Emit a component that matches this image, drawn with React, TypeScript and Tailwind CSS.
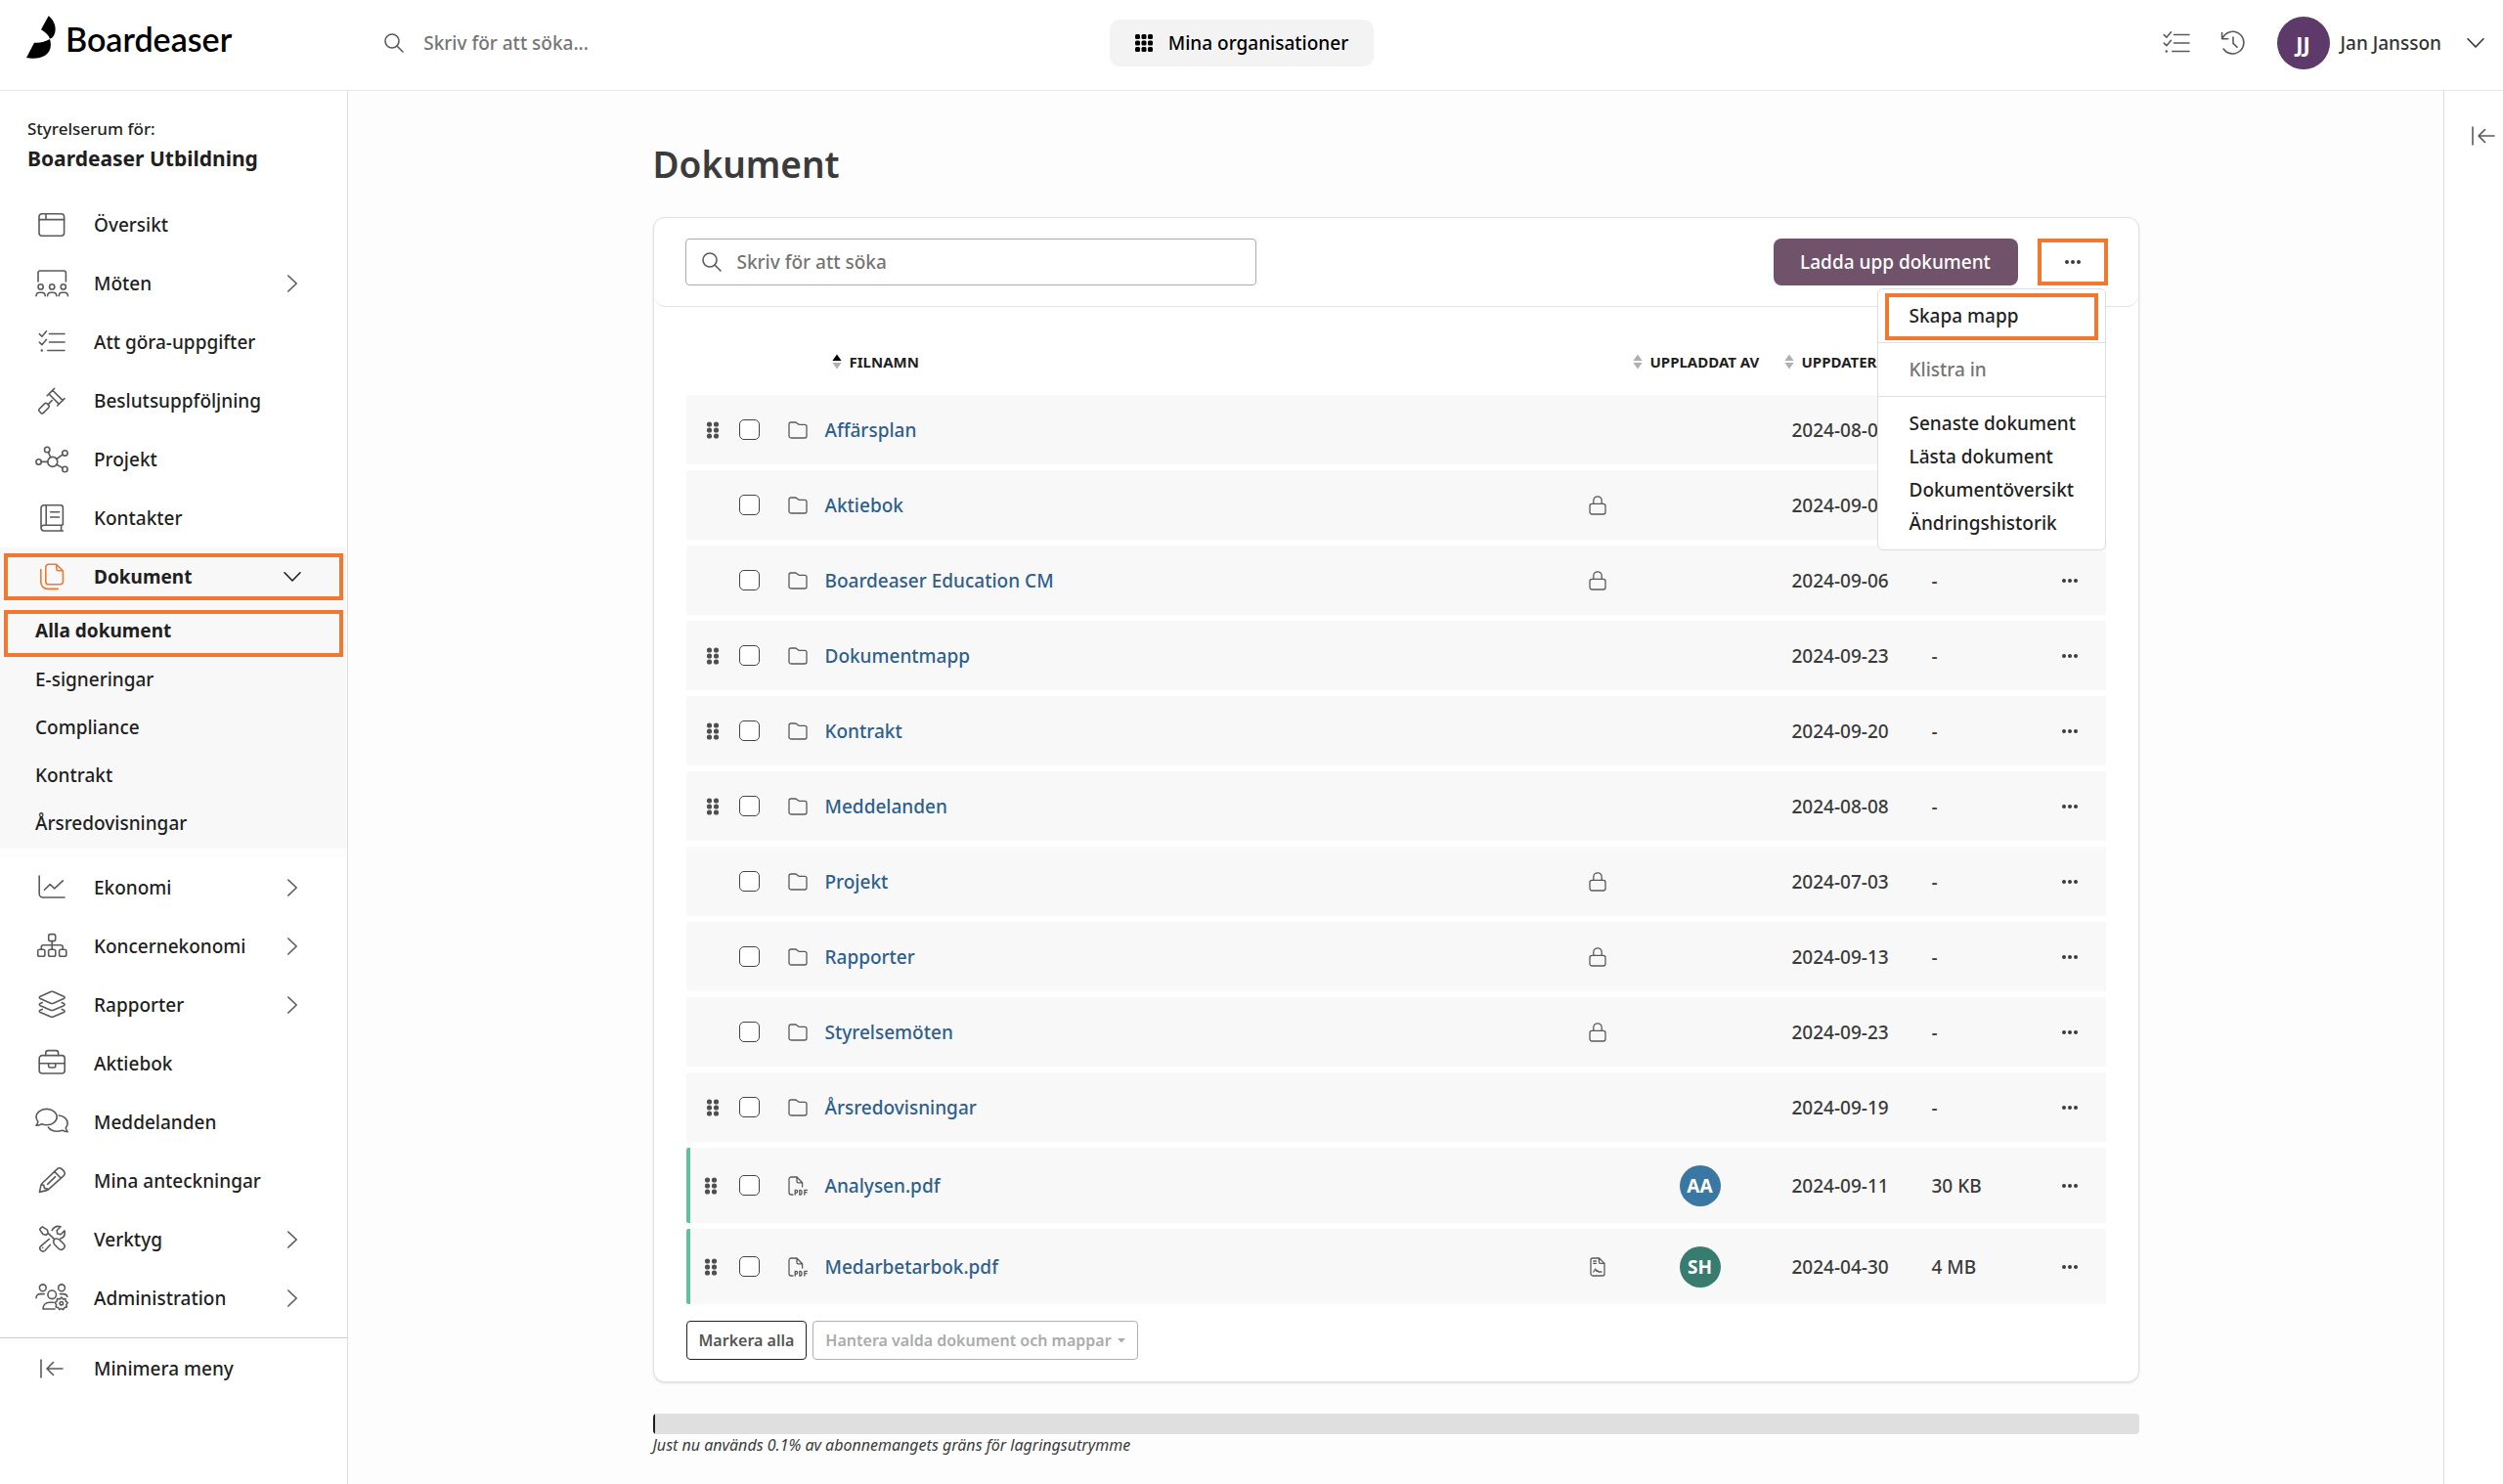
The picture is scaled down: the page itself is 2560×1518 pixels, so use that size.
import React, { useState } from "react";

type IconProps = { children: React.ReactNode; w?: number; h?: number; className?: string };

function Icon({ children, w = 34, h = 28, className = "" }: IconProps) {
  return (
    <svg
      width={w}
      height={h}
      viewBox={`0 0 ${w} ${h}`}
      fill="none"
      stroke="currentColor"
      strokeWidth="1.6"
      strokeLinecap="round"
      strokeLinejoin="round"
      aria-hidden="true"
      className={`shrink-0 overflow-visible ${className}`}
    >
      {children}
    </svg>
  );
}

const OverviewIcon = () => (
  <Icon>
    <rect x="4" y="2.8" width="25.6" height="22.4" rx="3" />
    <path d="M4 8.6h25.6M11 2.8v5.8" />
  </Icon>
);

const MeetingIcon = () => (
  <Icon>
    <path d="M3 12V3.2A2.2 2.2 0 0 1 5.2 1h24A2.2 2.2 0 0 1 31.4 3.2V12" />
    <circle cx="5.6" cy="17.4" r="2.6" />
    <circle cx="17.2" cy="17.4" r="2.6" />
    <circle cx="28.8" cy="17.4" r="2.6" />
    <path d="M1 26.8c0-2.2 1.6-3.6 3.6-3.6h2c2 0 3.6 1.4 3.6 3.6M12.6 26.8c0-2.2 1.6-3.6 3.6-3.6h2c2 0 3.6 1.4 3.6 3.6M24.2 26.8c0-2.2 1.6-3.6 3.6-3.6h2c2 0 3.6 1.4 3.6 3.6" />
  </Icon>
);

const TasksIcon = () => (
  <Icon>
    <path d="M14.5 5.5H30M14.5 14H30M12.8 22.5H30M4.3 5.6l2.6 2.6 4.6-5.4M4.3 14.1l2.6 2.6 4.6-5.4" />
    <circle cx="6.8" cy="22.5" r="1.2" fill="currentColor" stroke="none" />
  </Icon>
);

const GavelIcon = () => (
  <Icon>
    <path d="M12.2 8.8l7.4-7.4M22.6 19l7.4-7.4M14 7l10.4 10.4M17.8 3.2l10.4 10.4M13.2 17.6l4-4" />
    <rect x="-5.6" y="-2.9" width="11.2" height="5.8" rx="1.8" transform="translate(9 21.6) rotate(-45)" />
  </Icon>
);

const ProjectIcon = () => (
  <Icon>
    <circle cx="17.8" cy="16.4" r="5" />
    <circle cx="3.6" cy="16.4" r="2.7" />
    <circle cx="12.2" cy="4" r="2.7" />
    <circle cx="30.4" cy="7.4" r="2.7" />
    <circle cx="30.4" cy="24" r="2.7" />
    <path d="M6.3 16.4h6.5M13.3 6.5l2.5 5.3M28.1 8.8l-6.2 4.7M28 22.6l-6-3.4" />
  </Icon>
);

const ContactsIcon = () => (
  <Icon>
    <path d="M28.4 20.6V3.4A2.6 2.6 0 0 0 25.8.8H9A3 3 0 0 0 6 3.8v20a3.2 3.2 0 0 0 3.2 3.2h19.2M11.2.8v20M9.2 21.2h17.2a2 2 0 0 0 2-2M9.2 21.2A3 3 0 0 0 6 24.2M26.6 21.2V27M15.6 7.8h9M15.6 13h9" />
  </Icon>
);

const DocumentsIcon = () => (
  <Icon className="text-[#f07830]">
    <path d="M21.6 1.3h-8a2.8 2.8 0 0 0-2.8 2.8v14.8a2.8 2.8 0 0 0 2.8 2.8h12a2.8 2.8 0 0 0 2.8-2.8V8zM21.8 1.5v4.7a1.6 1.6 0 0 0 1.6 1.6h4.8M5.8 6.6v13a6.8 6.8 0 0 0 6.8 6.8h10.6" />
  </Icon>
);

const ChartIcon = () => (
  <Icon>
    <path d="M4.2 2v18.2A3.8 3.8 0 0 0 8 24h22M9.4 16.3l5.8-5.7 4.5 4.2 8.6-8" />
  </Icon>
);

const OrgIcon = () => (
  <Icon>
    <rect x="13.7" y="1.6" width="7" height="7" rx="1.8" />
    <rect x="2.7" y="17.2" width="7.2" height="7" rx="1.8" />
    <rect x="13.6" y="17.2" width="7.2" height="7" rx="1.8" />
    <rect x="24.6" y="17.2" width="7.2" height="7" rx="1.8" />
    <path d="M17.2 8.6v8.6M6.3 17.2v-2.4a2 2 0 0 1 2-2h17.9a2 2 0 0 1 2 2v2.4" />
  </Icon>
);

const LayersIcon = () => (
  <Icon>
    <path d="M15.8.6L5.2 5.3c-1.2.6-1.2 1.6 0 2.2l10.6 4.7c.9.4 1.9.4 2.8 0l10.6-4.7c1.2-.6 1.2-1.6 0-2.2L18.6.6c-.9-.4-1.9-.4-2.8 0z" />
    <path d="M7.2 11.6l-2 .9c-1.2.6-1.2 1.6 0 2.2l10.6 4.5c.9.4 1.9.4 2.8 0l10.6-4.5c1.2-.6 1.2-1.6 0-2.2l-2-.9M7.2 18.4l-2 .9c-1.2.6-1.2 1.6 0 2.2l10.6 4.5c.9.4 1.9.4 2.8 0l10.6-4.5c1.2-.6 1.2-1.6 0-2.2l-2-.9" />
  </Icon>
);

const BriefcaseIcon = () => (
  <Icon>
    <rect x="4.2" y="5.6" width="26" height="18.4" rx="3" />
    <path d="M10.8 5.6V3a2.4 2.4 0 0 1 2.4-2.4h8A2.4 2.4 0 0 1 23.6 3v2.6M4.2 13.8h26M13.6 13.8v2.8a1.4 1.4 0 0 0 1.4 1.4h4.4a1.4 1.4 0 0 0 1.4-1.4v-2.8" />
  </Icon>
);

const ChatIcon = () => (
  <Icon>
    <path d="M11.6.4c6 0 10.6 3.6 10.6 8.2s-4.6 8.2-10.6 8.2c-1.9 0-3.6-.4-5.2-1-1.5 1-3.3 1.5-5.5 1.5 1-1.1 1.7-2.5 2-4-1.2-1.3-1.900-2.900-1.900-4.700C1 4 5.6.4 11.6.4z" />
    <path d="M24.4 7c5 .6 8.7 3.900 8.7 8 0 1.8-.7 3.4-1.900 4.700.3 1.500 1 2.900 2 4-2.200 0-4-.5-5.500-1.500-1.600.6-3.300 1-5.200 1-3.900 0-7.200-1.600-9.100-4" />
  </Icon>
);

const PencilIcon = () => (
  <Icon>
    <path d="M22.4 1.9a3.4 3.4 0 0 1 4.8 0l2 2a3.4 3.4 0 0 1 0 4.8L13.6 22.6a4 4 0 0 1-1.7 1L4.4 25.4 6 18.2a4 4 0 0 1 1-1.7zM19.6 4.4l6.8 6.8M6.2 17.8l2.6.6.6 3 3 .7.8.9M12.6 17.3l8-7.6" />
  </Icon>
);

const ToolsIcon = () => (
  <Icon>
    <path d="M5 2.8L7.4.9l5 3.3.8 3.2 6.4 6.2M13.2 7.4l-2 1.9-3.3-.8L4.6 3.6 5 2.8" />
    <path d="M19.6 13.6c1.9-1 3.9-.7 5.4.7l4 3.9c3.3 3.4-1.7 8.4-5 5l-4-4c-1.4-1.5-1.6-3.7-.4-5.6z" />
    <path d="M17.2 4.6C19 1.2 22.4-.2 26 .8l-3.9 3.9.7 3.3 3.3.7L30 4.9c.8 4-.8 7-4.2 8.2M14.4 13.4l-8.6 7.2c-3 3 1.4 7.4 4.4 4.4l5.2-5.7M7.8 22.4v.1" />
  </Icon>
);

const AdminIcon = () => (
  <Icon>
    <circle cx="7.8" cy="3.3" r="3.4" />
    <circle cx="27" cy="3.3" r="3.4" />
    <circle cx="17.2" cy="10.3" r="4.3" />
    <path d="M1 13.8c0-2.4 1.8-4.2 4.2-4.2h4M25.4 9.6h3.2c2 0 3.6 1 4.2 2.6M20 25H8c0-4.2 2.8-6.8 6.6-6.8h4.2" />
    <path d="M26.9 13l1.5 1.9 2.4-.4.4 2.4 2 1.7-1.4 2 .5 2.4-2.4.6-1.3 2-1.9-1-1.9 1-1.3-2-2.4-.6.5-2.4-1.4-2 2-1.7.4-2.4 2.4.4z" />
    <circle cx="26.8" cy="19.2" r="1.7" />
  </Icon>
);

const CollapseIcon = ({ className = "" }: { className?: string }) => (
  <Icon w={24} h={20} className={className}>
    <path d="M1 1v18M23 10H7M13.5 3.5L7 10l6.5 6.5" />
  </Icon>
);

const SearchIcon = () => (
  <Icon w={20} h={20}>
    <circle cx="8" cy="8" r="7" />
    <path d="M13 13l6 6" />
  </Icon>
);

const ChevronRight = () => (
  <Icon w={10} h={18}>
    <path d="M.8 1l8.4 8-8.4 8" />
  </Icon>
);

const ChevronDown = ({ className = "" }: { className?: string }) => (
  <Icon w={18} h={10} className={className}>
    <path d="M1 .8l8 8.2 8-8.2" />
  </Icon>
);

const HistoryIcon = () => (
  <Icon w={26} h={26}>
    <path d="M1.6 2.6v6.2h6.2M2 8.6A11.3 11.3 0 1 1 3.2 19M13 7v6.4l4 3.8" />
  </Icon>
);

const FolderIcon = () => (
  <Icon w={20} h={18}>
    <path
      strokeWidth="1.3"
      d="M3 1h4.3c.7 0 1.3.3 1.7.7l1.2 1.1c.4.4.9.5 1.5.5H17a2 2 0 0 1 2 2V15a2 2 0 0 1-2 2H3a2 2 0 0 1-2-2V3a2 2 0 0 1 2-2z"
    />
  </Icon>
);

const PdfIcon = () => (
  <Icon w={20} h={20}>
    <path strokeWidth="1.3" d="M5 19H3.2A2.2 2.2 0 0 1 1 16.8V3.2A2.2 2.2 0 0 1 3.2 1H9l5.6 5.8V11M9 1v4.4A1.4 1.4 0 0 0 10.4 6.8h4.2" />
    <path
      strokeWidth="1.3"
      d="M7.2 19v-4.6h1.1a1.3 1.3 0 0 1 0 2.7H7.2M11.8 14.4v4.6h.7a1.5 1.5 0 0 0 1.5-1.5v-1.6a1.5 1.5 0 0 0-1.5-1.5zM19.4 14.4h-2.6V19M16.8 16.7h2.2"
    />
  </Icon>
);

const LockIcon = () => (
  <Icon w={18} h={20}>
    <rect x="1" y="8.4" width="16" height="10.6" rx="2.2" strokeWidth="1.3" />
    <path strokeWidth="1.3" d="M4.8 8.2V5a4.2 4.2 0 0 1 8.4 0v3.2" />
  </Icon>
);

const SignedIcon = () => (
  <Icon w={16} h={20}>
    <path
      strokeWidth="1.3"
      d="M3 1h6.6L15 6.4V17a2 2 0 0 1-2 2H3a2 2 0 0 1-2-2V3a2 2 0 0 1 2-2zM9.4 1v3.8a1.6 1.6 0 0 0 1.6 1.6h4M3.8 4h2.6M3.8 6.4h2.6M3.8 15l2-3 1.2 2.6 1-1 1 1.4h3"
    />
  </Icon>
);

function Dots() {
  return (
    <svg width="16" height="4" viewBox="0 0 16 4" fill="currentColor" aria-hidden="true">
      <circle cx="2" cy="2" r="2" />
      <circle cx="8" cy="2" r="2" />
      <circle cx="14" cy="2" r="2" />
    </svg>
  );
}

function Grip() {
  return (
    <svg width="14" height="18" viewBox="0 0 14 18" fill="currentColor" aria-hidden="true">
      {[3, 9, 15].map((y) => (
        <React.Fragment key={y}>
          <circle cx="3.5" cy={y} r="2.6" />
          <circle cx="10.5" cy={y} r="2.6" />
        </React.Fragment>
      ))}
    </svg>
  );
}

function GridIcon() {
  return (
    <svg width="18" height="18" viewBox="0 0 18 18" fill="currentColor" aria-hidden="true">
      {[0, 6.5, 13].map((y) => [0, 6.5, 13].map((x) => <rect key={`${x}-${y}`} x={x} y={y} width="5" height="5" rx="1.5" />))}
    </svg>
  );
}

function SortIcon({ asc = false }: { asc?: boolean }) {
  return (
    <svg width="10" height="16" viewBox="0 0 10 16" aria-hidden="true">
      <path d="M5 0.5L9.6 7H0.4z" fill={asc ? "#000" : "#b0b0b0"} />
      <path d="M5 15.5L0.4 9h9.2z" fill="#b0b0b0" />
    </svg>
  );
}

/* Orange marker frame drawn on top of a control */
const Frame = ({ className }: { className: string }) => (
  <span aria-hidden="true" className={`pointer-events-none absolute border-4 border-[#f07830] ${className}`} />
);

type NavEntry = { label: string; icon: React.ReactNode; more?: boolean };

const navTop: NavEntry[] = [
  { label: "Översikt", icon: <OverviewIcon /> },
  { label: "Möten", icon: <MeetingIcon />, more: true },
  { label: "Att göra-uppgifter", icon: <TasksIcon /> },
  { label: "Beslutsuppföljning", icon: <GavelIcon /> },
  { label: "Projekt", icon: <ProjectIcon /> },
  { label: "Kontakter", icon: <ContactsIcon /> },
];

const subItems = ["E-signeringar", "Compliance", "Kontrakt", "Årsredovisningar"];

const navBottom: NavEntry[] = [
  { label: "Ekonomi", icon: <ChartIcon />, more: true },
  { label: "Koncernekonomi", icon: <OrgIcon />, more: true },
  { label: "Rapporter", icon: <LayersIcon />, more: true },
  { label: "Aktiebok", icon: <BriefcaseIcon /> },
  { label: "Meddelanden", icon: <ChatIcon /> },
  { label: "Mina anteckningar", icon: <PencilIcon /> },
  { label: "Verktyg", icon: <ToolsIcon />, more: true },
  { label: "Administration", icon: <AdminIcon />, more: true },
];

function NavItem({ label, icon, more }: NavEntry) {
  return (
    <li>
      <a href="#" className="flex h-15 items-center pl-9 pr-[51px] text-[#5a5a5a]">
        {icon}
        <span className="ml-[26px] flex-1 text-[#1f1f1f]">{label}</span>
        {more && <ChevronRight />}
      </a>
    </li>
  );
}

type Row = {
  name: string;
  date: string;
  size: string;
  grip?: boolean;
  lock?: boolean;
  pdf?: boolean;
  signed?: boolean;
  by?: { initials: string; tone: string };
};

const rows: Row[] = [
  { name: "Affärsplan", date: "2024-08-08", size: "-", grip: true },
  { name: "Aktiebok", date: "2024-09-06", size: "-", lock: true },
  { name: "Boardeaser Education CM", date: "2024-09-06", size: "-", lock: true },
  { name: "Dokumentmapp", date: "2024-09-23", size: "-", grip: true },
  { name: "Kontrakt", date: "2024-09-20", size: "-", grip: true },
  { name: "Meddelanden", date: "2024-08-08", size: "-", grip: true },
  { name: "Projekt", date: "2024-07-03", size: "-", lock: true },
  { name: "Rapporter", date: "2024-09-13", size: "-", lock: true },
  { name: "Styrelsemöten", date: "2024-09-23", size: "-", lock: true },
  { name: "Årsredovisningar", date: "2024-09-19", size: "-", grip: true },
  { name: "Analysen.pdf", date: "2024-09-11", size: "30 KB", grip: true, pdf: true, by: { initials: "AA", tone: "bg-[#3a77a3]" } },
  { name: "Medarbetarbok.pdf", date: "2024-04-30", size: "4 MB", grip: true, pdf: true, signed: true, by: { initials: "SH", tone: "bg-[#377c6e]" } },
];

function SortButton({ label, asc }: { label: string; asc?: boolean }) {
  return (
    <button type="button" className="flex items-center gap-2 text-[15px] font-bold uppercase whitespace-nowrap text-[#1f1f1f]">
      <SortIcon asc={asc} />
      {label}
    </button>
  );
}

function FileTable() {
  return (
    <table className="w-full table-fixed border-separate border-spacing-x-0 border-spacing-y-1.5 text-left">
      <colgroup>
        <col className="w-11" />
        <col className="w-[50px]" />
        <col className="w-[38px]" />
        <col />
        <col className="w-15" />
        <col className="w-[150px]" />
        <col className="w-[150px]" />
        <col className="w-[116px]" />
        <col className="w-[74px]" />
      </colgroup>
      <thead>
        <tr className="h-14">
          <td colSpan={3} />
          <th scope="col" aria-sort="ascending" className="pl-[17px]"><SortButton label="Filnamn" asc /></th>
          <td />
          <th scope="col" className="pl-1.5"><SortButton label="Uppladdat av" /></th>
          <th scope="col" className="pl-[11px]"><SortButton label="Uppdaterad" /></th>
          <td colSpan={2} />
        </tr>
      </thead>
      <tbody>
        {rows.map((r) => (
          <tr key={r.name} className={r.pdf ? "h-[77px] bg-[#f8f8f8]" : "h-[71px] bg-[#f8f8f8]"}>
            <td className={r.pdf ? "rounded-l-xs border-l-4 border-[#62bfa4] pl-3.5 text-[#4f4f4f]" : "rounded-l-xs pl-5 text-[#4f4f4f]"}>
              {r.grip && <Grip />}
            </td>
            <td className="pl-2.5">
              <input
                type="checkbox"
                aria-label={`Markera ${r.name}`}
                className="block size-[21px] appearance-none rounded-[5px] border border-[#444] bg-white checked:bg-[#71526b]"
              />
            </td>
            <td className="pl-2.5 text-[#5a5a5a]">{r.pdf ? <PdfIcon /> : <FolderIcon />}</td>
            <td className="pl-2.5">
              <a href="#" className="text-[#2f5f8c]">{r.name}</a>
            </td>
            <td className="text-[#5a5a5a]">
              <span className="flex justify-center">
                {r.lock && <LockIcon />}
                {r.signed && <SignedIcon />}
              </span>
            </td>
            <td>
              {r.by && (
                <span className={`mx-auto flex size-[42px] items-center justify-center rounded-full text-[19px] font-bold text-white ${r.by.tone}`}>
                  {r.by.initials}
                </span>
              )}
            </td>
            <td className="pl-[19px]">{r.date}</td>
            <td className="pl-3">{r.size}</td>
            <td>
              <button type="button" aria-label={`Åtgärder för ${r.name}`} className="mx-auto flex size-8 items-center justify-center">
                <Dots />
              </button>
            </td>
          </tr>
        ))}
      </tbody>
    </table>
  );
}

function ActionsMenu() {
  return (
    <div role="menu" className="absolute top-[51px] right-0.5 z-10 w-[234px] rounded-md border border-[#dcdcdc] bg-white text-[#1f1f1f]">
      <div className="relative flex h-[54px] items-center pl-8">
        <button type="button" role="menuitem">Skapa mapp</button>
        <Frame className="inset-x-[7px] top-1 bottom-0.5" />
      </div>
      <div className="flex h-[56px] items-center border-y border-[#e0e0e0] pl-8 text-[#757575]">
        <button type="button" role="menuitem" disabled>Klistra in</button>
      </div>
      <div className="flex flex-col items-start py-2.5 pl-8">
        {["Senaste dokument", "Lästa dokument", "Dokumentöversikt", "Ändringshistorik"].map((t) => (
          <button key={t} type="button" role="menuitem" className="h-[34px] whitespace-nowrap">{t}</button>
        ))}
      </div>
    </div>
  );
}

function Header() {
  return (
    <header className="flex h-[93px] items-center border-b border-[#e8e8e8] bg-white pr-[19px] pb-1 pl-[27px]">
      <div className="flex flex-1 items-center">
        <a href="#" aria-label="Boardeaser" className="mr-[156px] flex items-center gap-2.5 text-black">
          <svg width="30" height="44" viewBox="32 28 90 132" fill="currentColor" aria-hidden="true" className="mb-3">
            <path d="M100 29C116 41 125 62 119 82C116 92 111 98 104 99C100 87 90 79 77 71Z" />
            <path d="M56 111C72 113 90 108 104 100C113 130 99 152 69 158C56 160 42 159 32 157Z" />
          </svg>
          <span className="pb-2 font-['Lato',sans-serif] text-[34px] leading-9 font-semibold">Boardeaser</span>
        </a>
        <label className="flex items-center gap-5 text-[#5a5a5a]">
          <SearchIcon />
          <input type="search" aria-label="Sök" placeholder="Skriv för att söka..." className="w-80 bg-transparent outline-none placeholder:text-[#757575]" />
        </label>
      </div>
      <button type="button" className="mr-7 flex h-12 items-center gap-4 rounded-[10px] bg-[#f3f3f3] px-[26px] text-black">
        <GridIcon />
        Mina organisationer
      </button>
      <div className="flex flex-1 items-center justify-end text-[#5a5a5a]">
        <button type="button" aria-label="Uppgifter" className="mr-7"><TasksIcon /></button>
        <button type="button" aria-label="Historik" className="mr-8"><HistoryIcon /></button>
        <button type="button" className="flex items-center text-[#333]">
          <span className="flex size-[54px] items-center justify-center rounded-full bg-[#5e3a6b] text-[22px] font-bold text-white">JJ</span>
          <span className="ml-[11px]">Jan Jansson</span>
          <ChevronDown className="ml-[26px]" />
        </button>
      </div>
    </header>
  );
}

function Sidebar() {
  return (
    <aside className="w-[356px] shrink-0 border-r border-[#dedede] bg-white">
      <div className="px-7 pt-[25px]">
        <p className="text-[17px] leading-7 text-[#1f1f1f]">Styrelserum för:</p>
        <p className="text-[21px] leading-8 font-bold text-[#1f1f1f]">Boardeaser Utbildning</p>
      </div>
      <nav aria-label="Huvudmeny" className="pt-[22px]">
        <ul>
          {navTop.map((n) => <NavItem key={n.label} {...n} />)}
          <li className="mb-2.5 bg-[#f8f8f8] pb-0.5 shadow-[0_9px_0_#fdfdfd]">
            <div className="relative">
              <a href="#" aria-expanded="true" className="flex h-15 items-center pr-[47px] pl-9">
                <DocumentsIcon />
                <span className="ml-[26px] flex-1 font-bold text-[#1f1f1f]">Dokument</span>
                <ChevronDown className="text-[#1f1f1f]" />
              </a>
              <Frame className="inset-x-1 inset-y-1.5" />
            </div>
            <ul>
              <li className="relative">
                <a href="#" aria-current="page" className="flex h-[50px] items-center pl-9 font-bold text-[#1f1f1f]">Alla dokument</a>
                <Frame className="inset-x-1 top-1 -bottom-0.5" />
              </li>
              {subItems.map((s) => (
                <li key={s}>
                  <a href="#" className="flex h-[49px] items-center pl-9 text-[#1f1f1f]">{s}</a>
                </li>
              ))}
            </ul>
          </li>
          {navBottom.map((n) => <NavItem key={n.label} {...n} />)}
        </ul>
      </nav>
      <div className="mt-2.5 border-t border-[#cccccc]">
        <button type="button" className="flex h-[62px] w-full items-center pl-[41px] text-[#5a5a5a]">
          <CollapseIcon />
          <span className="ml-[31px] text-[#1f1f1f]">Minimera meny</span>
        </button>
      </div>
    </aside>
  );
}

export default function App() {
  const [query, setQuery] = useState("");
  return (
    <div className="flex min-h-screen flex-col bg-[#fdfdfd] font-['Noto_Sans',sans-serif] text-[19px] leading-[26px] font-medium text-[#3b3b3b]">
      <Header />
      <div className="flex flex-1">
        <Sidebar />
        <main className="min-w-0 flex-1">
          <div className="mx-auto max-w-[1520px]">
            <h1 className="pt-[49px] text-[37px] leading-[52px] font-semibold">Dokument</h1>
            <section className="mt-7 rounded-xl border border-[#e2e2e2] bg-white shadow-sm">
              <div className="flex items-center rounded-b-xl border-b border-[#e2e2e2] py-[21px] pr-[31px] pl-8">
                <label className="flex h-12 w-full max-w-[584px] items-center gap-4 rounded-sm border border-[#ababab] px-4 text-[#5a5a5a]">
                  <SearchIcon />
                  <input
                    type="search"
                    aria-label="Sök dokument"
                    placeholder="Skriv för att söka"
                    value={query}
                    onChange={(e) => setQuery(e.target.value)}
                    className="min-w-0 flex-1 bg-transparent outline-none placeholder:text-[#757575]"
                  />
                </label>
                <button type="button" className="ml-auto h-12 w-[250px] rounded-lg bg-[#71526b] text-white">Ladda upp dokument</button>
                <div className="relative ml-5">
                  <button type="button" aria-haspopup="menu" aria-expanded="true" aria-label="Fler åtgärder" className="flex h-12 w-[72px] items-center justify-center">
                    <Dots />
                  </button>
                  <Frame className="inset-0" />
                  <ActionsMenu />
                </div>
              </div>
              <div className="px-[33px] pt-[22px] pb-[22px]">
                <FileTable />
                <div className="mt-[11px] flex gap-1.5 text-base font-semibold">
                  <button type="button" className="h-10 rounded-sm border border-[#222] px-3 text-[#555]">Markera alla</button>
                  <button type="button" disabled className="flex h-10 items-center gap-1.5 rounded-sm border border-[#b0b0b0] px-3 text-[#ababab]">
                    Hantera valda dokument och mappar
                    <svg width="8" height="5" viewBox="0 0 8 5" fill="currentColor" aria-hidden="true"><path d="M0 0h8L4 4.5z" /></svg>
                  </button>
                </div>
              </div>
            </section>
            <div role="progressbar" aria-label="Lagringsutrymme" aria-valuenow={0.1} aria-valuemin={0} aria-valuemax={100} className="mt-8 h-[21px] overflow-hidden rounded-sm bg-[#dfdfdf]">
              <div className="h-full w-0.5 bg-[#1f1f1f]" />
            </div>
            <p className="text-base leading-[22px] font-normal italic">Just nu används 0.1% av abonnemangets gräns för lagringsutrymme</p>
          </div>
        </main>
        <aside className="w-[61px] shrink-0 border-l border-[#dedede] bg-white pt-9 pl-7">
          <button type="button" aria-label="Öppna sidopanel" className="text-[#5a5a5a]"><CollapseIcon /></button>
        </aside>
      </div>
    </div>
  );
}
